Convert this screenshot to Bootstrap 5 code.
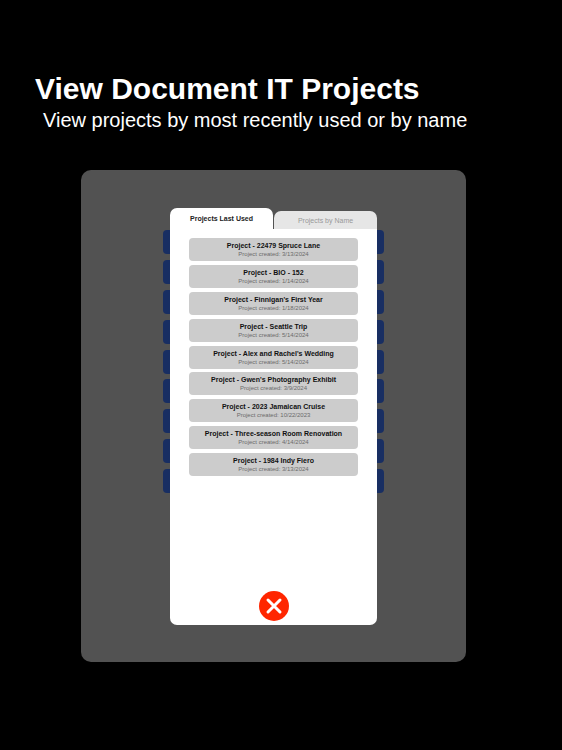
<!DOCTYPE html>
<html lang="en">
<head>
<meta charset="utf-8">
<meta name="viewport" content="width=device-width, initial-scale=1">
<title>View Document IT Projects</title>
<link href="https://cdn.jsdelivr.net/npm/bootstrap@5.3.0/dist/css/bootstrap.min.css" rel="stylesheet">
<style>
body { font-family: "Liberation Sans", Arial, sans-serif; }
.promo-head { padding: 71px 35px 37px; }
.promo-title { font-size: 30px; line-height: 36px; }
.promo-sub { font-size: 20px; line-height: 26px; padding-left: 8px; }
.screen { margin: 0 96px 88px 81px; padding: 38px 24px 37px; background: #525252; border-radius: 10px; display: grid; justify-items: center; }
.bars, .sheet { grid-area: 1 / 1; }
.bars { width: 100%; max-width: 221px; height: 263px; margin-top: 22px; }
.bar { height: 24px; border-radius: 4px; background: #182e62; }
.sheet { width: 100%; max-width: 207px; z-index: 1; }
.tabs { gap: 1px; }
.tab-on, .tab-off { border: 0; padding: 0; font-size: 7px; line-height: 10px; border-radius: 7px 7px 0 0; }
.tab-on { height: 21px; background: #fff; color: #222; font-weight: 700; }
.tab-off { height: 18px; padding-top: 2px; background: #e6e6e6; color: #999; }
.sheet-body { min-height: 396px; padding: 9px 19px 4px; border-radius: 0 0 7px 7px; }
.projects { min-height: 238px; }
.project { height: 23px; padding: 0; border: 0; border-radius: 4px; background: #ccc; }
.project-name { font-size: 7px; line-height: 9px; font-weight: 700; color: #111; }
.project-date { font-size: 6px; line-height: 8px; color: #6b6b6b; }
.close-btn { width: 30px; height: 30px; }
</style>
</head>
<body class="bg-black text-white">
<header class="promo-head">
  <h1 class="promo-title fw-bold mb-0 text-nowrap">View Document IT Projects</h1>
  <p class="promo-sub mb-0 text-nowrap">View projects by most recently used or by name</p>
</header>
<main class="screen">
  <div class="bars d-flex flex-column justify-content-between" aria-hidden="true">
    <div class="bar"></div><div class="bar"></div><div class="bar"></div>
    <div class="bar"></div><div class="bar"></div><div class="bar"></div>
    <div class="bar"></div><div class="bar"></div><div class="bar"></div>
  </div>
  <section class="sheet d-flex flex-column" aria-label="Projects">
    <div class="tabs d-flex align-items-end" role="tablist">
      <button type="button" class="tab-on w-50" role="tab" aria-selected="true">Projects Last Used</button>
      <button type="button" class="tab-off w-50" role="tab" aria-selected="false">Projects by Name</button>
    </div>
    <div class="sheet-body bg-white flex-grow-1 d-flex flex-column justify-content-between">
      <div class="projects d-flex flex-column justify-content-between">
        <button type="button" class="project d-flex flex-column align-items-center justify-content-center"><span class="project-name">Project - 22479 Spruce Lane</span><span class="project-date">Project created: 3/13/2024</span></button>
        <button type="button" class="project d-flex flex-column align-items-center justify-content-center"><span class="project-name">Project - BIO - 152</span><span class="project-date">Project created: 1/14/2024</span></button>
        <button type="button" class="project d-flex flex-column align-items-center justify-content-center"><span class="project-name">Project - Finnigan's First Year</span><span class="project-date">Project created: 1/18/2024</span></button>
        <button type="button" class="project d-flex flex-column align-items-center justify-content-center"><span class="project-name">Project - Seattle Trip</span><span class="project-date">Project created: 5/14/2024</span></button>
        <button type="button" class="project d-flex flex-column align-items-center justify-content-center"><span class="project-name">Project - Alex and Rachel's Wedding</span><span class="project-date">Project created: 5/14/2024</span></button>
        <button type="button" class="project d-flex flex-column align-items-center justify-content-center"><span class="project-name">Project - Gwen's Photography Exhibit</span><span class="project-date">Project created: 3/9/2024</span></button>
        <button type="button" class="project d-flex flex-column align-items-center justify-content-center"><span class="project-name">Project - 2023 Jamaican Cruise</span><span class="project-date">Project created: 10/22/2023</span></button>
        <button type="button" class="project d-flex flex-column align-items-center justify-content-center"><span class="project-name">Project - Three-season Room Renovation</span><span class="project-date">Project created: 4/14/2024</span></button>
        <button type="button" class="project d-flex flex-column align-items-center justify-content-center"><span class="project-name">Project - 1984 Indy Fiero</span><span class="project-date">Project created: 3/13/2024</span></button>
      </div>
      <button type="button" class="close-btn btn p-0 border-0 rounded-circle d-flex align-self-center" aria-label="Close">
        <svg width="30" height="30" viewBox="0 0 30 30" aria-hidden="true">
          <circle cx="15" cy="15" r="15" fill="#ff2600"/>
          <path d="M9 9 21 21M21 9 9 21" stroke="#fff" stroke-width="3" stroke-linecap="round"/>
        </svg>
      </button>
    </div>
  </section>
</main>
<script src="https://cdn.jsdelivr.net/npm/bootstrap@5.3.0/dist/js/bootstrap.bundle.min.js"></script>
</body>
</html>
